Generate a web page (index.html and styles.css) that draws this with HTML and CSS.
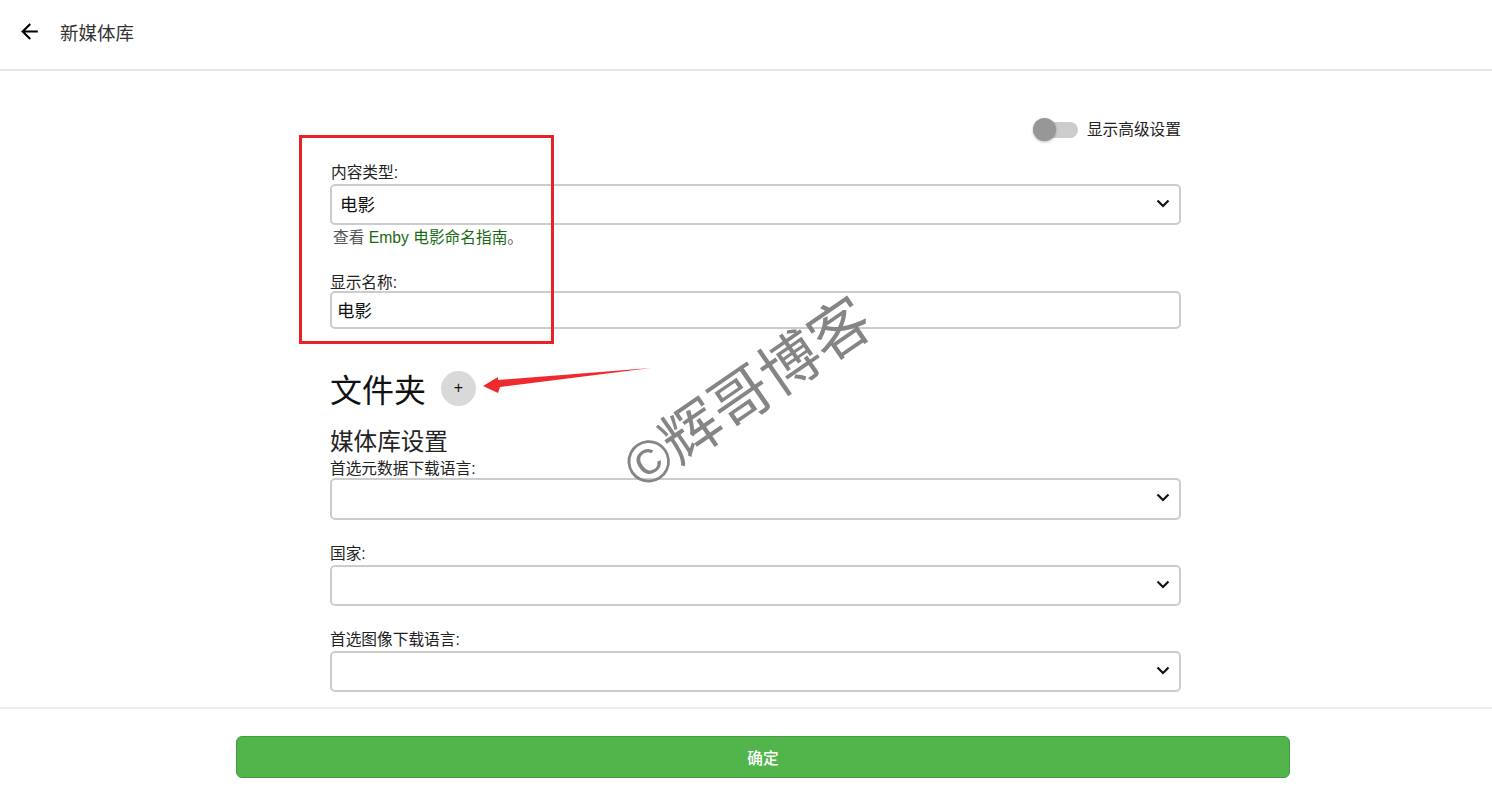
FILE: index.html
```html
<!DOCTYPE html>
<html lang="zh-CN">

<head>
    <meta charset="UTF-8">
    <title>新媒体库</title>
    <link rel="stylesheet" href="styles.css">
</head>

<body>
    <div class="page">
        <header class="topbar">
            <button class="back-button" type="button" aria-label="返回">
                <svg viewBox="0 0 24 24" width="25" height="25"><path d="M20 11H7.83l5.59-5.59L12 4l-8 8 8 8 1.41-1.41L7.83 13H20v-2z"/></svg>
            </button>
            <h1 class="page-title">新媒体库</h1>
        </header>

        <main class="content">
            <form class="library-form">
                <div class="advanced-row">
                    <span class="toggle"><span class="toggle-knob"></span></span>
                    <span class="advanced-label">显示高级设置</span>
                </div>

                <label class="field-label first">内容类型:</label>
                <div class="select-box">
                    <select class="field-select">
                        <option>电影</option>
                    </select>
                    <svg class="chevron" viewBox="0 0 14 9" width="14" height="9"><path d="M1.5 1.5 7 7l5.5-5.5"/></svg>
                </div>
                <div class="field-help">查看 <a href="#">Emby 电影命名指南</a>。</div>

                <label class="field-label name-label">显示名称:</label>
                <input class="field-input" type="text" value="电影">

                <div class="folder-row">
                    <h2 class="folder-title">文件夹</h2>
                    <button class="add-button" type="button">+</button>
                </div>

                <h3 class="settings-title">媒体库设置</h3>

                <label class="field-label tight">首选元数据下载语言:</label>
                <div class="select-box tall">
                    <select class="field-select"></select>
                    <svg class="chevron" viewBox="0 0 14 9" width="14" height="9"><path d="M1.5 1.5 7 7l5.5-5.5"/></svg>
                </div>

                <label class="field-label spaced">国家:</label>
                <div class="select-box">
                    <select class="field-select"></select>
                    <svg class="chevron" viewBox="0 0 14 9" width="14" height="9"><path d="M1.5 1.5 7 7l5.5-5.5"/></svg>
                </div>

                <label class="field-label spaced">首选图像下载语言:</label>
                <div class="select-box">
                    <select class="field-select"></select>
                    <svg class="chevron" viewBox="0 0 14 9" width="14" height="9"><path d="M1.5 1.5 7 7l5.5-5.5"/></svg>
                </div>
            </form>
        </main>

        <footer class="bottombar">
            <button class="submit-button" type="button">确定</button>
        </footer>

        <!-- annotations on top of the screenshot -->
        <div class="red-box"></div>
        <svg class="red-arrow" viewBox="0 0 175 30" width="175" height="30">
            <polygon points="2,18 17,9 17,12 170,0 19,19 17,25"/>
        </svg>
        <div class="watermark">©辉哥博客</div>
    </div>
</body>

</html>
```
FILE: styles.css
```css
* {
    box-sizing: border-box;
}

body {
    margin: 0;
    background: #fff;
    color: #222;
    font-family: "Liberation Sans", "Noto Sans CJK SC", sans-serif;
    font-size: 15.7px;
    overflow: hidden;
}

.page {
    position: relative;
    display: flex;
    flex-direction: column;
    height: 789px;
    overflow: hidden;
}

.topbar {
    display: flex;
    align-items: center;
    flex: none;
    height: 71px;
    padding: 0 0 6px 17px;
    border-bottom: 2px solid #e6e6e6;
}

.back-button {
    display: flex;
    padding: 0;
    border: none;
    background: none;
}

.page-title {
    margin: 0 0 0 18px;
    font-size: 18.5px;
    font-weight: 400;
    color: #333;
}

.content {
    flex: 1;
    overflow: hidden;
    padding: 47px 0 0 330px;
}

.library-form {
    width: 851px;
}

.advanced-row {
    display: flex;
    align-items: center;
    justify-content: flex-end;
    height: 24px;
}

.toggle {
    position: relative;
    width: 45px;
    height: 16px;
    border-radius: 8px;
    background: #ccc;
}

.toggle-knob {
    position: absolute;
    left: 0;
    top: -4px;
    width: 23px;
    height: 23px;
    border-radius: 50%;
    background: #979797;
    box-shadow: 0 1px 3px rgba(0, 0, 0, 0.25);
}

.advanced-label {
    margin-left: 9px;
    line-height: 24px;
}

.field-label {
    display: block;
    height: 18px;
    line-height: 18px;
}

.field-label.first {
    margin-top: 22px;
    padding-left: 1px;
    margin-bottom: 2px;
}

.field-label.name-label {
    margin-top: 27px;
    margin-bottom: -1px;
}

.field-label.tight {
    margin-top: 0;
    margin-bottom: 0;
}

.field-label.spaced {
    margin-top: 25px;
    margin-bottom: 2px;
}

.select-box {
    position: relative;
    height: 41px;
}

.select-box.tall {
    height: 42px;
}

.field-select {
    display: block;
    width: 100%;
    height: 100%;
    padding: 0 8px;
    border: 2px solid #ccc;
    border-radius: 5px;
    background: #fff;
    color: #111;
    font: inherit;
    font-size: 17.5px;
    appearance: none;
}

.chevron {
    position: absolute;
    right: 11px;
    top: 15px;
    fill: none;
    stroke: #111;
    stroke-width: 2.2;
}

.field-help {
    margin-top: 4px;
    padding-left: 3px;
    line-height: 18px;
    color: #555;
}

.field-help a {
    color: #186a10;
    text-decoration: none;
}

.field-input {
    display: block;
    width: 100%;
    height: 38px;
    padding: 0 5px 2px;
    border: 2px solid #ccc;
    border-radius: 5px;
    color: #111;
    font: inherit;
    font-size: 17.5px;
}

.folder-row {
    display: flex;
    align-items: center;
    margin-top: 41px;
    height: 36px;
}

.folder-title {
    margin: 0;
    font-size: 32px;
    font-weight: 400;
    color: #111;
}

.add-button {
    width: 35px;
    height: 35px;
    margin-left: 15px;
    padding: 0;
    border: none;
    border-radius: 50%;
    background: #d9d9d9;
    color: #111;
    font-size: 16px;
}

.settings-title {
    margin: 23px 0 0;
    height: 31px;
    line-height: 26px;
    font-size: 23.6px;
    font-weight: 400;
    color: #222;
}

.bottombar {
    display: flex;
    flex: none;
    height: 82px;
    padding: 27px 202px 0 236px;
    border-top: 2px solid #eee;
}

.submit-button {
    width: 100%;
    height: 42px;
    border: 1px solid #3f9e3a;
    border-radius: 6px;
    background: #52b54b;
    color: #fff;
    font: inherit;
    font-weight: 500;
}

/* annotations */
.red-box {
    position: absolute;
    left: 299px;
    top: 135px;
    width: 255px;
    height: 209px;
    border: 3px solid #ea2227;
}

.red-arrow {
    position: absolute;
    left: 481px;
    top: 368px;
    fill: #ee2a2e;
}

.watermark {
    position: absolute;
    left: 748px;
    top: 394px;
    font-size: 60px;
    line-height: 1;
    color: #858585;
    white-space: nowrap;
    transform: translate(-50%, -50%) rotate(-34.5deg);
}
```
